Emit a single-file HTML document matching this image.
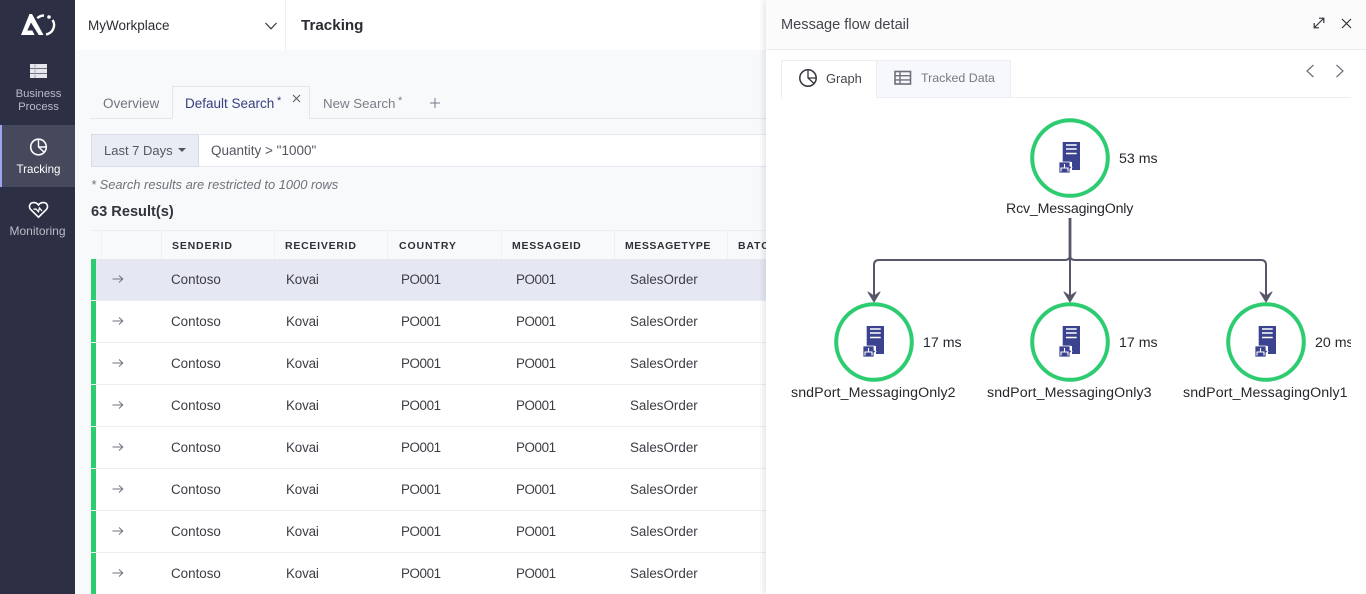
<!DOCTYPE html>
<html lang="en">
<head>
<meta charset="utf-8">
<title>Tracking</title>
<style>
html,body{margin:0;padding:0;width:1366px;height:594px;overflow:hidden;background:#f8f9fb}
body{font-family:"Liberation Sans","DejaVu Sans",sans-serif;font-size:13px;color:#3c3d45;position:relative}
.a{position:absolute;white-space:nowrap}
.row{position:absolute;left:91px;width:675px;height:41px;background:#fff;border-bottom:1px solid #eceef3}
.row .g{position:absolute;left:0;top:0;width:5px;height:41px;background:#2ecc71}
.row span{position:absolute;top:13px;font-size:13.4px;line-height:16px;color:#3c3d45}
.row span:nth-child(4){letter-spacing:-.15px}
.row span:nth-child(5),.row span:nth-child(6){letter-spacing:-.4px}
.row svg{position:absolute;left:21px;top:15px}
.th{position:absolute;top:239px;font-size:10.5px;font-weight:bold;line-height:14px;color:#2f3037}
.sep{position:absolute;top:231px;width:1px;height:28px;background:#eff0f4}
.lab{position:absolute;font-size:14.2px;line-height:18px;color:#26272d;white-space:nowrap}
.nav{position:absolute;left:1px;width:75px;text-align:center;font-size:11.3px;line-height:13px;color:#b9bcc9}
</style>
</head>
<body>
<!-- top header -->
<div class="a" style="left:75px;top:0;width:691px;height:50px;background:#fff"></div>
<div class="a" style="left:285px;top:0;width:1px;height:50px;background:#eff0f3"></div>
<div class="a" style="left:88px;top:17px;font-size:13.5px;line-height:18px;color:#2b2c33">MyWorkplace</div>
<svg class="a" style="left:264px;top:21px" width="14" height="10" viewBox="0 0 14 10"><path d="M1.5 2 L7 7.8 L12.5 2" fill="none" stroke="#33343c" stroke-width="1.2"/></svg>
<div class="a" style="left:301px;top:16px;font-size:15.2px;line-height:20px;font-weight:bold;color:#2b2c33">Tracking</div>

<!-- sidebar -->
<div class="a" style="left:0;top:0;width:75px;height:594px;background:#2d3044"></div>
<div class="a" style="left:0;top:125px;width:75px;height:62px;background:#46495c"></div>
<div class="a" style="left:0;top:125px;width:2px;height:62px;background:#9aa6f2"></div>
<svg class="a" style="left:20px;top:12px" width="36" height="26" viewBox="0 0 36 26">
<path d="M1 23 L9.5 2 H12 L23.5 23 H18.8 L11 10.5 L7.3 18.5 H12.3 L14.6 23Z" fill="#fff"/>
<path d="M17.3 6.2 A9.5 9.5 0 0 1 24 3.5" fill="none" stroke="#fff" stroke-width="2.4"/>
<circle cx="29" cy="5" r="1.8" fill="#fff"/>
<path d="M32.6 8 A9.5 9.5 0 0 1 26 22.4" fill="none" stroke="#fff" stroke-width="2.4"/>
</svg>
<svg class="a" style="left:30px;top:64px" width="17" height="14" viewBox="0 0 17 14">
<rect width="17" height="14" fill="#e6e7ec"/>
<path d="M0 4.5H17M0 9.5H17" stroke="#70727f" stroke-width="1"/>
<path d="M5 0V14" stroke="#a9abb7" stroke-width="1"/>
</svg>
<div class="nav" style="top:88px">Business<br>Process</div>
<svg class="a" style="left:29px;top:137px" width="19" height="20" viewBox="0 0 19 20">
<circle cx="9.5" cy="10" r="7.8" fill="none" stroke="#fff" stroke-width="1.6"/>
<path d="M9.5 2 V10 L15.5 15.5 M9.5 10 H17.4" fill="none" stroke="#fff" stroke-width="1.4"/>
</svg>
<div class="nav" style="top:163px;color:#fff;font-size:11.6px">Tracking</div>
<svg class="a" style="left:28px;top:201px" width="21" height="18" viewBox="0 0 21 18">
<path d="M10.5 16.2 L2.6 8.4 C0.4 5.8 1.6 1.8 5.4 1.6 C7.6 1.5 9.4 2.6 10.5 4 C11.6 2.6 13.4 1.5 15.6 1.6 C19.4 1.8 20.6 5.8 18.4 8.4Z" fill="none" stroke="#fff" stroke-width="1.6"/>
<path d="M5.5 8.2 H8.2 L10.5 10.8 L11.4 7 L14 10" fill="none" stroke="#fff" stroke-width="1.3"/>
</svg>
<div class="nav" style="top:225px;left:0;font-size:12px">Monitoring</div>

<!-- tabs -->
<div class="a" style="left:90px;top:118px;width:676px;height:1px;background:#e4e6ec"></div>
<div class="a" style="left:103px;top:95px;font-size:13.5px;line-height:17px;color:#72747e">Overview</div>
<div class="a" style="left:172px;top:86px;width:138px;height:33px;box-sizing:border-box;background:#f8f9fb;border:1px solid #e4e6ec;border-bottom:0"></div>
<div class="a" style="left:185px;top:95px;font-size:13.5px;line-height:17px;color:#36407f">Default Search</div>
<div class="a" style="left:277px;top:94px;font-size:11px;line-height:14px;color:#36407f">*</div>
<svg class="a" style="left:292px;top:94px" width="9" height="9" viewBox="0 0 9 9"><path d="M1 1 L8 8 M8 1 L1 8" stroke="#555762" stroke-width="1"/></svg>
<div class="a" style="left:323px;top:95px;font-size:13.3px;line-height:17px;color:#7b7d87">New Search</div>
<div class="a" style="left:398px;top:94px;font-size:11px;line-height:14px;color:#7b7d87">*</div>
<svg class="a" style="left:429px;top:97px" width="12" height="12" viewBox="0 0 12 12"><path d="M6 1 V11 M1 6 H11" stroke="#77798a" stroke-width="1"/></svg>

<!-- search -->
<div class="a" style="left:91px;top:134px;width:675px;height:33px;box-sizing:border-box;background:#fff;border:1px solid #e6e9ef;border-left:0;border-right:0"></div>
<div class="a" style="left:91px;top:134px;width:108px;height:33px;box-sizing:border-box;background:#e9ecf5;border:1px solid #d8dcea"></div>
<div class="a" style="left:104px;top:142px;font-size:13px;line-height:17px;color:#54565f">Last 7 Days</div>
<div class="a" style="left:178px;top:148px;width:0;height:0;border-left:4px solid transparent;border-right:4px solid transparent;border-top:4px solid #54565f"></div>
<div class="a" style="left:211px;top:142px;font-size:13.5px;line-height:17px;color:#54565f">Quantity &gt; "1000"</div>
<div class="a" style="left:91px;top:176px;font-size:12.9px;line-height:17px;font-style:italic;color:#70727b">* Search results are restricted to 1000 rows</div>
<div class="a" style="left:91px;top:203px;font-size:14.6px;line-height:18px;font-weight:bold;color:#33343c">63 Result(s)</div>

<!-- table head -->
<div class="a" style="left:91px;top:230px;width:675px;height:1px;background:#eceef2"></div>
<div class="sep" style="left:101px"></div>
<div class="sep" style="left:161px"></div>
<div class="sep" style="left:274px"></div>
<div class="sep" style="left:387px"></div>
<div class="sep" style="left:501px"></div>
<div class="sep" style="left:614px"></div>
<div class="sep" style="left:727px"></div>
<div class="th" style="left:172px;letter-spacing:.82px">SENDERID</div>
<div class="th" style="left:285px;letter-spacing:.75px">RECEIVERID</div>
<div class="th" style="left:399px;letter-spacing:.9px">COUNTRY</div>
<div class="th" style="left:512px;letter-spacing:.72px">MESSAGEID</div>
<div class="th" style="left:625px;letter-spacing:.55px">MESSAGETYPE</div>
<div class="th" style="left:738px;letter-spacing:.8px">BATC</div>

<!-- rows -->
<div class="row" style="top:259px;background:#e5e7f3"><i class="g"></i><svg width="12" height="10" viewBox="0 0 12 10"><path d="M0.5 5 H10.5 M7 1.5 L10.8 5 L7 8.5" fill="none" stroke="#6f717d"/></svg><span style="left:80px">Contoso</span><span style="left:195px">Kovai</span><span style="left:310px">PO001</span><span style="left:425px">PO001</span><span style="left:539px">SalesOrder</span></div>
<div class="row" style="top:301px"><i class="g"></i><svg width="12" height="10" viewBox="0 0 12 10"><path d="M0.5 5 H10.5 M7 1.5 L10.8 5 L7 8.5" fill="none" stroke="#6f717d"/></svg><span style="left:80px">Contoso</span><span style="left:195px">Kovai</span><span style="left:310px">PO001</span><span style="left:425px">PO001</span><span style="left:539px">SalesOrder</span></div>
<div class="row" style="top:343px"><i class="g"></i><svg width="12" height="10" viewBox="0 0 12 10"><path d="M0.5 5 H10.5 M7 1.5 L10.8 5 L7 8.5" fill="none" stroke="#6f717d"/></svg><span style="left:80px">Contoso</span><span style="left:195px">Kovai</span><span style="left:310px">PO001</span><span style="left:425px">PO001</span><span style="left:539px">SalesOrder</span></div>
<div class="row" style="top:385px"><i class="g"></i><svg width="12" height="10" viewBox="0 0 12 10"><path d="M0.5 5 H10.5 M7 1.5 L10.8 5 L7 8.5" fill="none" stroke="#6f717d"/></svg><span style="left:80px">Contoso</span><span style="left:195px">Kovai</span><span style="left:310px">PO001</span><span style="left:425px">PO001</span><span style="left:539px">SalesOrder</span></div>
<div class="row" style="top:427px"><i class="g"></i><svg width="12" height="10" viewBox="0 0 12 10"><path d="M0.5 5 H10.5 M7 1.5 L10.8 5 L7 8.5" fill="none" stroke="#6f717d"/></svg><span style="left:80px">Contoso</span><span style="left:195px">Kovai</span><span style="left:310px">PO001</span><span style="left:425px">PO001</span><span style="left:539px">SalesOrder</span></div>
<div class="row" style="top:469px"><i class="g"></i><svg width="12" height="10" viewBox="0 0 12 10"><path d="M0.5 5 H10.5 M7 1.5 L10.8 5 L7 8.5" fill="none" stroke="#6f717d"/></svg><span style="left:80px">Contoso</span><span style="left:195px">Kovai</span><span style="left:310px">PO001</span><span style="left:425px">PO001</span><span style="left:539px">SalesOrder</span></div>
<div class="row" style="top:511px"><i class="g"></i><svg width="12" height="10" viewBox="0 0 12 10"><path d="M0.5 5 H10.5 M7 1.5 L10.8 5 L7 8.5" fill="none" stroke="#6f717d"/></svg><span style="left:80px">Contoso</span><span style="left:195px">Kovai</span><span style="left:310px">PO001</span><span style="left:425px">PO001</span><span style="left:539px">SalesOrder</span></div>
<div class="row" style="top:553px"><i class="g"></i><svg width="12" height="10" viewBox="0 0 12 10"><path d="M0.5 5 H10.5 M7 1.5 L10.8 5 L7 8.5" fill="none" stroke="#6f717d"/></svg><span style="left:80px">Contoso</span><span style="left:195px">Kovai</span><span style="left:310px">PO001</span><span style="left:425px">PO001</span><span style="left:539px">SalesOrder</span></div>

<!-- panel -->
<div class="a" style="left:766px;top:0;width:600px;height:594px;background:#fff;box-shadow:-3px 0 5px rgba(40,44,70,.10)"></div>
<div class="a" style="left:766px;top:0;width:600px;height:49px;background:#fbfbfb;border-bottom:1px solid #ebecef"></div>
<div class="a" style="left:781px;top:16px;font-size:14.6px;line-height:18px;color:#44454d">Message flow detail</div>
<svg class="a" style="left:1313px;top:17px" width="12" height="12" viewBox="0 0 12 12"><path d="M1.5 10.5 L10.5 1.5 M6 1.2 H10.8 V6 M1.2 6 V10.8 H6" fill="none" stroke="#33343c" stroke-width="1.2"/></svg>
<svg class="a" style="left:1341px;top:18px" width="11" height="11" viewBox="0 0 11 11"><path d="M1 1 L10 10 M10 1 L1 10" stroke="#26272d" stroke-width="1.1"/></svg>
<svg class="a" style="left:1305px;top:64px" width="10" height="14" viewBox="0 0 10 14"><path d="M8.5 1 L2 7 L8.5 13" fill="none" stroke="#6d6f7b" stroke-width="1.2"/></svg>
<svg class="a" style="left:1335px;top:64px" width="10" height="14" viewBox="0 0 10 14"><path d="M1.5 1 L8 7 L1.5 13" fill="none" stroke="#6d6f7b" stroke-width="1.2"/></svg>

<div class="a" style="left:781px;top:97px;width:570px;height:1px;background:#eceef3"></div>
<div class="a" style="left:877px;top:60px;width:134px;height:38px;box-sizing:border-box;background:#f7f8fb;border:1px solid #eceef3;border-left:0"></div>
<div class="a" style="left:781px;top:60px;width:96px;height:38px;box-sizing:border-box;background:#fff;border:1px solid #eceef3;border-bottom:0"></div>
<svg class="a" style="left:798px;top:68px" width="20" height="20" viewBox="0 0 20 20">
<circle cx="10" cy="10" r="8.2" fill="none" stroke="#33343c" stroke-width="1.5"/>
<path d="M10 2 V10 L16 15.5 M10 10 H18" fill="none" stroke="#33343c" stroke-width="1.3"/>
</svg>
<div class="a" style="left:826px;top:70px;font-size:12.9px;line-height:17px;color:#44454d">Graph</div>
<svg class="a" style="left:894px;top:70px" width="18" height="16" viewBox="0 0 18 16">
<rect x="1" y="1.5" width="15.5" height="12.5" fill="none" stroke="#6d6f7b" stroke-width="1.6"/>
<path d="M1 5.7H16.5M1 9.9H16.5M6 1.5V14" stroke="#6d6f7b" stroke-width="1.4"/>
</svg>
<div class="a" style="left:921px;top:70px;font-size:12.4px;line-height:17px;color:#777983">Tracked Data</div>

<!-- graph -->
<svg class="a" style="left:766px;top:100px" width="585" height="320" viewBox="766 100 585 320">
<defs>
<g id="srv">
<path d="M-4.3 -15 H13 V13 H5 V5 H-4.3Z" fill="#3b4390"/>
<path d="M-1 -12 H9.7 M-1 -8 H9.7 M-1 -3.5 H9.7" stroke="#fff" stroke-width="1.5"/>
<path d="M-8 5 H3 V9 L5 10.5 L3 12 V16 H-8Z" fill="#3b4390" stroke="#fff" stroke-width=".8"/>
<path d="M-2.5 7 V11 M-6 14.5 V11 H1 V14.5" fill="none" stroke="#fff" stroke-width="1.1"/>
</g>
</defs>
<path d="M1070 218 V255 Q1070 260 1065 260 H879 Q874 260 874 265 V300" fill="none" stroke="#565869" stroke-width="2"/>
<path d="M1070 218 V300" fill="none" stroke="#565869" stroke-width="2"/>
<path d="M1070 218 V260" fill="none" stroke="#565869" stroke-width="2.8"/>
<path d="M1070 255 Q1070 260 1075 260 H1261 Q1266 260 1266 265 V300" fill="none" stroke="#565869" stroke-width="2"/>
<path d="M868 292 L874 296 L880 292 L874 302Z" fill="#565869" stroke="#565869" stroke-linejoin="round"/>
<path d="M1064 292 L1070 296 L1076 292 L1070 302Z" fill="#565869" stroke="#565869" stroke-linejoin="round"/>
<path d="M1260 292 L1266 296 L1272 292 L1266 302Z" fill="#565869" stroke="#565869" stroke-linejoin="round"/>
<circle cx="1070" cy="158" r="37.8" fill="#fff" stroke="#2ecc71" stroke-width="4"/>
<circle cx="874" cy="342" r="37.8" fill="#fff" stroke="#2ecc71" stroke-width="4"/>
<circle cx="1070" cy="342" r="37.8" fill="#fff" stroke="#2ecc71" stroke-width="4"/>
<circle cx="1266" cy="342" r="37.8" fill="#fff" stroke="#2ecc71" stroke-width="4"/>
<use href="#srv" x="1067" y="157"/>
<use href="#srv" x="871" y="341"/>
<use href="#srv" x="1067" y="341"/>
<use href="#srv" x="1263" y="341"/>
</svg>
<div class="lab" style="left:1119px;top:150px">53 ms</div>
<div class="lab" style="left:1006px;top:200px;letter-spacing:-.17px">Rcv_MessagingOnly</div>
<div class="lab" style="left:923px;top:334px">17 ms</div>
<div class="lab" style="left:1119px;top:334px">17 ms</div>
<div class="a" style="left:1315px;top:334px;width:36px;height:18px;overflow:hidden"><div class="lab" style="left:0;top:0">20 ms</div></div>
<div class="lab" style="left:791px;top:384px;letter-spacing:.1px">sndPort_MessagingOnly2</div>
<div class="lab" style="left:987px;top:384px;letter-spacing:.1px">sndPort_MessagingOnly3</div>
<div class="lab" style="left:1183px;top:384px;letter-spacing:.1px">sndPort_MessagingOnly1</div>
</body>
</html>
